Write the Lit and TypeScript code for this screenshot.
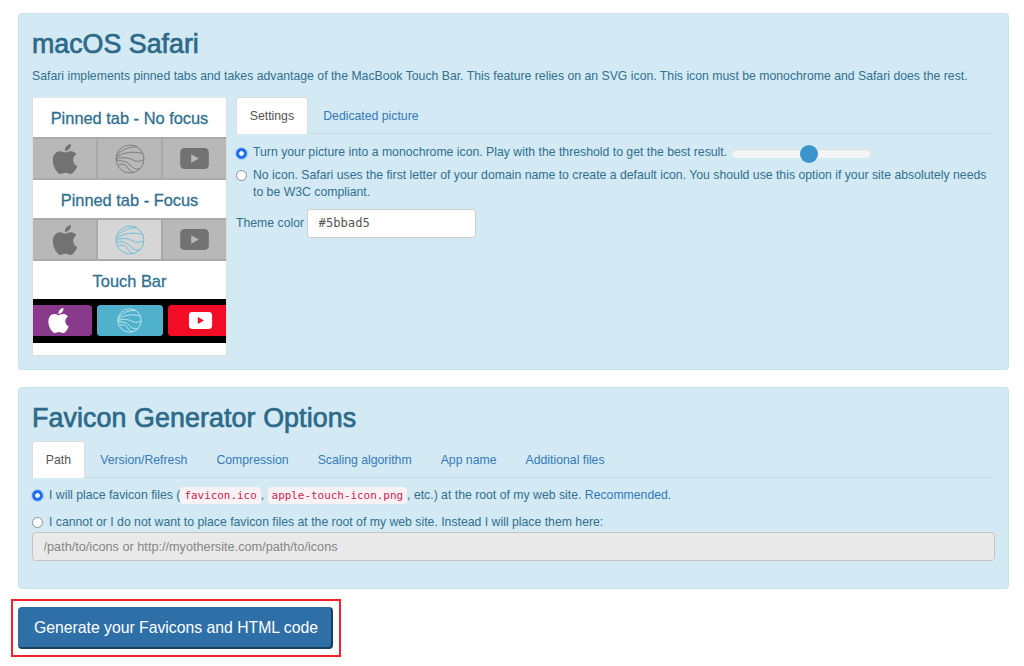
import { LitElement, html, css, svg } from "lit";
import { customElement } from "lit/decorators.js";

const apple = svg`<path d="M12.152 6.896c-.948 0-2.415-1.078-3.96-1.04-2.04.027-3.91 1.183-4.961 3.014-2.117 3.675-.546 9.103 1.519 12.09 1.013 1.454 2.208 3.09 3.792 3.039 1.52-.065 2.09-.987 3.935-.987 1.831 0 2.35.987 3.96.948 1.637-.026 2.676-1.48 3.676-2.948 1.156-1.688 1.636-3.325 1.662-3.415-.039-.013-3.182-1.221-3.22-4.857-.026-3.04 2.48-4.494 2.597-4.559-1.429-2.09-3.623-2.324-4.39-2.376-2-.156-3.675 1.09-4.61 1.09zM15.53 3.83c.843-1.012 1.4-2.427 1.245-3.83-1.207.052-2.662.805-3.532 1.818-.78.896-1.454 2.338-1.273 3.714 1.338.104 2.715-.688 3.559-1.701"/>`;

function appleIcon(color: string) {
  return html`<svg class="apple" viewBox="0 0 24 24" fill=${color}>${apple}</svg>`;
}
function globeIcon(color: string) {
  return html`<svg class="globe" viewBox="0 0 30 30" fill="none" stroke=${color} stroke-width="0.85">
    <circle cx="15" cy="15" r="14"/>
    <path d="M1.5 12C6 6 14 2.5 22 2.8"/>
    <path d="M1.2 14C8 8 18 7 27.5 9.5"/>
    <path d="M1 15.5C8 12 14 14 18 16C22 18 25 17.5 29 15.5"/>
    <path d="M1.5 17C8 16 12 18 15 21C18 24 20 25.5 25 25"/>
    <path d="M3 21C8 19 11 21 13 24C14.5 26.5 16 28 18.5 28.6"/>
  </svg>`;
}
function ytIcon(bg: string, fg: string) {
  return html`<svg class="yt" viewBox="0 0 30 22">
    <rect width="30" height="22" rx="4.5" fill=${bg}/>
    <path d="M11.5 6.5l8 4.5-8 4.5z" fill=${fg}/>
  </svg>`;
}

@customElement("app-root")
export class AppRoot extends LitElement {
  static styles = css`
    :host {
      display: block;
      box-sizing: border-box;
      height: 666px;
      overflow: hidden;
      padding: 13px 15px 0 18px;
      background: #fff;
      font-family: "Liberation Sans", Arial, sans-serif;
      font-size: 12.26px;
      line-height: 17.4px;
      color: #31708f;
    }
    * { box-sizing: border-box; }
    .panel {
      background: #d3e9f4;
      border: 1px solid #c8e2ee;
      border-radius: 3.5px;
      padding: 14px 13px 0;
    }
    .safari { height: 357px; }
    .options { height: 202px; margin-top: 17px; }
    h2 {
      margin: 0;
      font-size: 26.8px;
      line-height: 32px;
      font-weight: 400;
      color: #2c6a88;
      -webkit-text-stroke: 0.7px #2c6a88;
    }
    .options h2 { letter-spacing: 0.1px; }
    .lead { margin: 8px 0 0; }
    .columns { display: flex; gap: 9px; margin-top: 12px; }
    .preview {
      flex: none;
      width: 195px;
      height: 259px;
      background: #fff;
      border: 1px solid #ddd;
      border-top-color: #e4e4e4;
    }
    .preview h3 {
      margin: 0;
      height: 39px;
      padding-top: 1.5px;
      display: flex;
      align-items: center;
      justify-content: center;
      font-size: 16.4px;
      font-weight: 400;
      -webkit-text-stroke: 0.3px #31708f;
    }
    .preview h3.next { height: 38px; padding-top: 3px; }
    .bar {
      display: grid;
      grid-template-columns: 63px 63px 1fr;
      height: 43px;
      background: #a9a9a9;
      gap: 2px;
      padding: 2px 0;
    }
    .cell {
      background: #b8b8b8;
      display: flex;
      align-items: center;
      justify-content: center;
    }
    .cell.on { background: #d6d6d6; }
    .apple { width: 30px; height: 30px; }
    .globe { width: 30px; height: 30px; }
    .yt { width: 29px; height: 21px; }
    .touch {
      display: grid;
      grid-template-columns: 59px 66.5px 1fr;
      gap: 4.5px;
      height: 44px;
      padding: 6px 0 7px;
      background: #000;
    }
    .key {
      display: flex;
      align-items: center;
      justify-content: center;
      border-radius: 3.5px;
    }
    .key.a { background: #8a3a8c; border-radius: 0 3.5px 3.5px 0; padding-right: 8px; }
    .key.b { background: #50b1cd; }
    .key.c { background: #f20c25; border-radius: 3.5px 0 0 3.5px; padding-left: 7px; }
    .key .apple { width: 25px; height: 25px; }
    .key .globe { width: 25px; height: 25px; }
    .key .yt { width: 25px; height: 17px; }
    .main { flex: 1; min-width: 0; }
    .tabs {
      display: flex;
      gap: 1.7px;
      height: 37px;
      border-bottom: 1px solid #c6dde8;
    }
    .tab {
      padding: 11px 13.7px 0;
      height: 37px;
      color: #337ab7;
      white-space: nowrap;
    }
    .tab.active {
      background: #fff;
      color: #555;
      border: 1px solid #ddd;
      border-bottom: 0;
      border-radius: 3.5px 3.5px 0 0;
      padding: 10px 12.8px 0;
    }
    .row { display: flex; align-items: flex-start; gap: 6px; }
    input[type="radio"] {
      appearance: none;
      flex: none;
      width: 11px;
      height: 11px;
      margin: 3px 0 0;
      border-radius: 50%;
      border: 1px solid #8e8e8e;
      background: #fff;
    }
    input[type="radio"]:checked {
      border: 1px solid #1a6ff0;
      background: radial-gradient(circle, #fff 0 2px, #1a6ff0 2.6px);
      box-shadow: 0 0 0 1px rgba(80, 140, 255, 0.35);
    }
    .monochrome { margin-top: 10px; align-items: center; }
    .monochrome input { margin-top: 0; }
    .slider {
      position: relative;
      flex: none;
      width: 139px;
      height: 9px;
      margin-left: -1px;
      background: #f2f4f5;
      border-radius: 5px;
      box-shadow: inset 0 1px 1px rgba(0, 0, 0, 0.1);
    }
    .thumb {
      position: absolute;
      left: 68px;
      top: -4px;
      width: 18px;
      height: 18px;
      border-radius: 50%;
      background: #3c94cc;
    }
    .noicon { margin-top: 5px; }
    .theme { display: flex; align-items: center; gap: 3px; margin-top: 7px; }
    .text-input {
      width: 169px;
      height: 29.5px;
      padding: 0 10.5px;
      background: #fff;
      border: 1px solid #ccc;
      border-radius: 3.5px;
      font-family: "DejaVu Sans Mono", monospace;
      font-size: 12.15px;
      color: #555;
    }
    .fav-tabs { margin-top: 7px; }
    .path-a { margin-top: 9px; }
    code {
      font-family: "DejaVu Sans Mono", monospace;
      font-size: 10.93px;
      color: #c7254e;
      background: #f9f2f4;
      padding: 2px 4px;
      border-radius: 3.5px;
    }
    a { color: #337ab7; text-decoration: none; }
    .path-b { margin-top: 10px; }
    .path-input {
      display: block;
      width: 100%;
      height: 29.5px;
      margin-top: 0;
      padding: 0 10.5px;
      background: #e9e9e9;
      border: 1px solid #c4c4c4;
      border-radius: 3.5px;
      font: inherit;
      font-size: 12.7px;
      color: #777;
    }
    .path-input::placeholder { color: #858585; opacity: 1; }
    .frame {
      width: 330px;
      height: 58px;
      margin: 10px 0 0 -7px;
      padding: 6px 0 0 5px;
      border: 2px solid #f4222f;
    }
    button {
      display: block;
      width: 315px;
      height: 42px;
      padding: 0 0 0 2px;
      background: #2f6fa8;
      border: 1px solid #2e6da4;
      border-bottom: 2px solid #1d3f5e;
      border-right: 2px solid #1d3f5e;
      border-radius: 4px;
      color: #fff;
      font-family: inherit;
      font-size: 15.75px;
    }
  `;

  render() {
    return html`
      <section class="panel safari">
        <h2>macOS Safari</h2>
        <p class="lead">Safari implements pinned tabs and takes advantage of the MacBook Touch Bar. This feature relies on an SVG icon. This icon must be monochrome and Safari does the rest.</p>
        <div class="columns">
          <div class="preview">
            <h3>Pinned tab - No focus</h3>
            <div class="bar">
              <div class="cell">${appleIcon("#727272")}</div>
              <div class="cell">${globeIcon("#727272")}</div>
              <div class="cell">${ytIcon("#727272", "#b8b8b8")}</div>
            </div>
            <h3 class="next">Pinned tab - Focus</h3>
            <div class="bar">
              <div class="cell">${appleIcon("#727272")}</div>
              <div class="cell on">${globeIcon("#5bbad5")}</div>
              <div class="cell">${ytIcon("#727272", "#b8b8b8")}</div>
            </div>
            <h3 class="next">Touch Bar</h3>
            <div class="touch">
              <div class="key a">${appleIcon("#fff")}</div>
              <div class="key b">${globeIcon("#e4f4f8")}</div>
              <div class="key c">${ytIcon("#fff", "#f20c25")}</div>
            </div>
          </div>
          <div class="main">
            <div class="tabs">
              <div class="tab active">Settings</div>
              <div class="tab">Dedicated picture</div>
            </div>
            <label class="row monochrome">
              <input type="radio" name="ico" checked />
              <span>Turn your picture into a monochrome icon. Play with the threshold to get the best result.</span>
              <span class="slider"><span class="thumb"></span></span>
            </label>
            <label class="row noicon">
              <input type="radio" name="ico" />
              <span>No icon. Safari uses the first letter of your domain name to create a default icon. You should use this option if your site absolutely needs to be W3C compliant.</span>
            </label>
            <div class="theme">
              <span>Theme color</span>
              <input class="text-input" value="#5bbad5" />
            </div>
          </div>
        </div>
      </section>
      <section class="panel options">
        <h2>Favicon Generator Options</h2>
        <div class="tabs fav-tabs">
          <div class="tab active">Path</div>
          <div class="tab">Version/Refresh</div>
          <div class="tab">Compression</div>
          <div class="tab">Scaling algorithm</div>
          <div class="tab">App name</div>
          <div class="tab">Additional files</div>
        </div>
        <label class="row path-a">
          <input type="radio" name="path" checked />
          <span>I will place favicon files (<code>favicon.ico</code>, <code>apple-touch-icon.png</code>, etc.) at the root of my web site. <a>Recommended</a>.</span>
        </label>
        <label class="row path-b">
          <input type="radio" name="path" />
          <span>I cannot or I do not want to place favicon files at the root of my web site. Instead I will place them here:</span>
        </label>
        <input class="path-input" disabled placeholder="/path/to/icons or http://myothersite.com/path/to/icons" />
      </section>
      <div class="frame"><button>Generate your Favicons and HTML code</button></div>
    `;
  }
}
